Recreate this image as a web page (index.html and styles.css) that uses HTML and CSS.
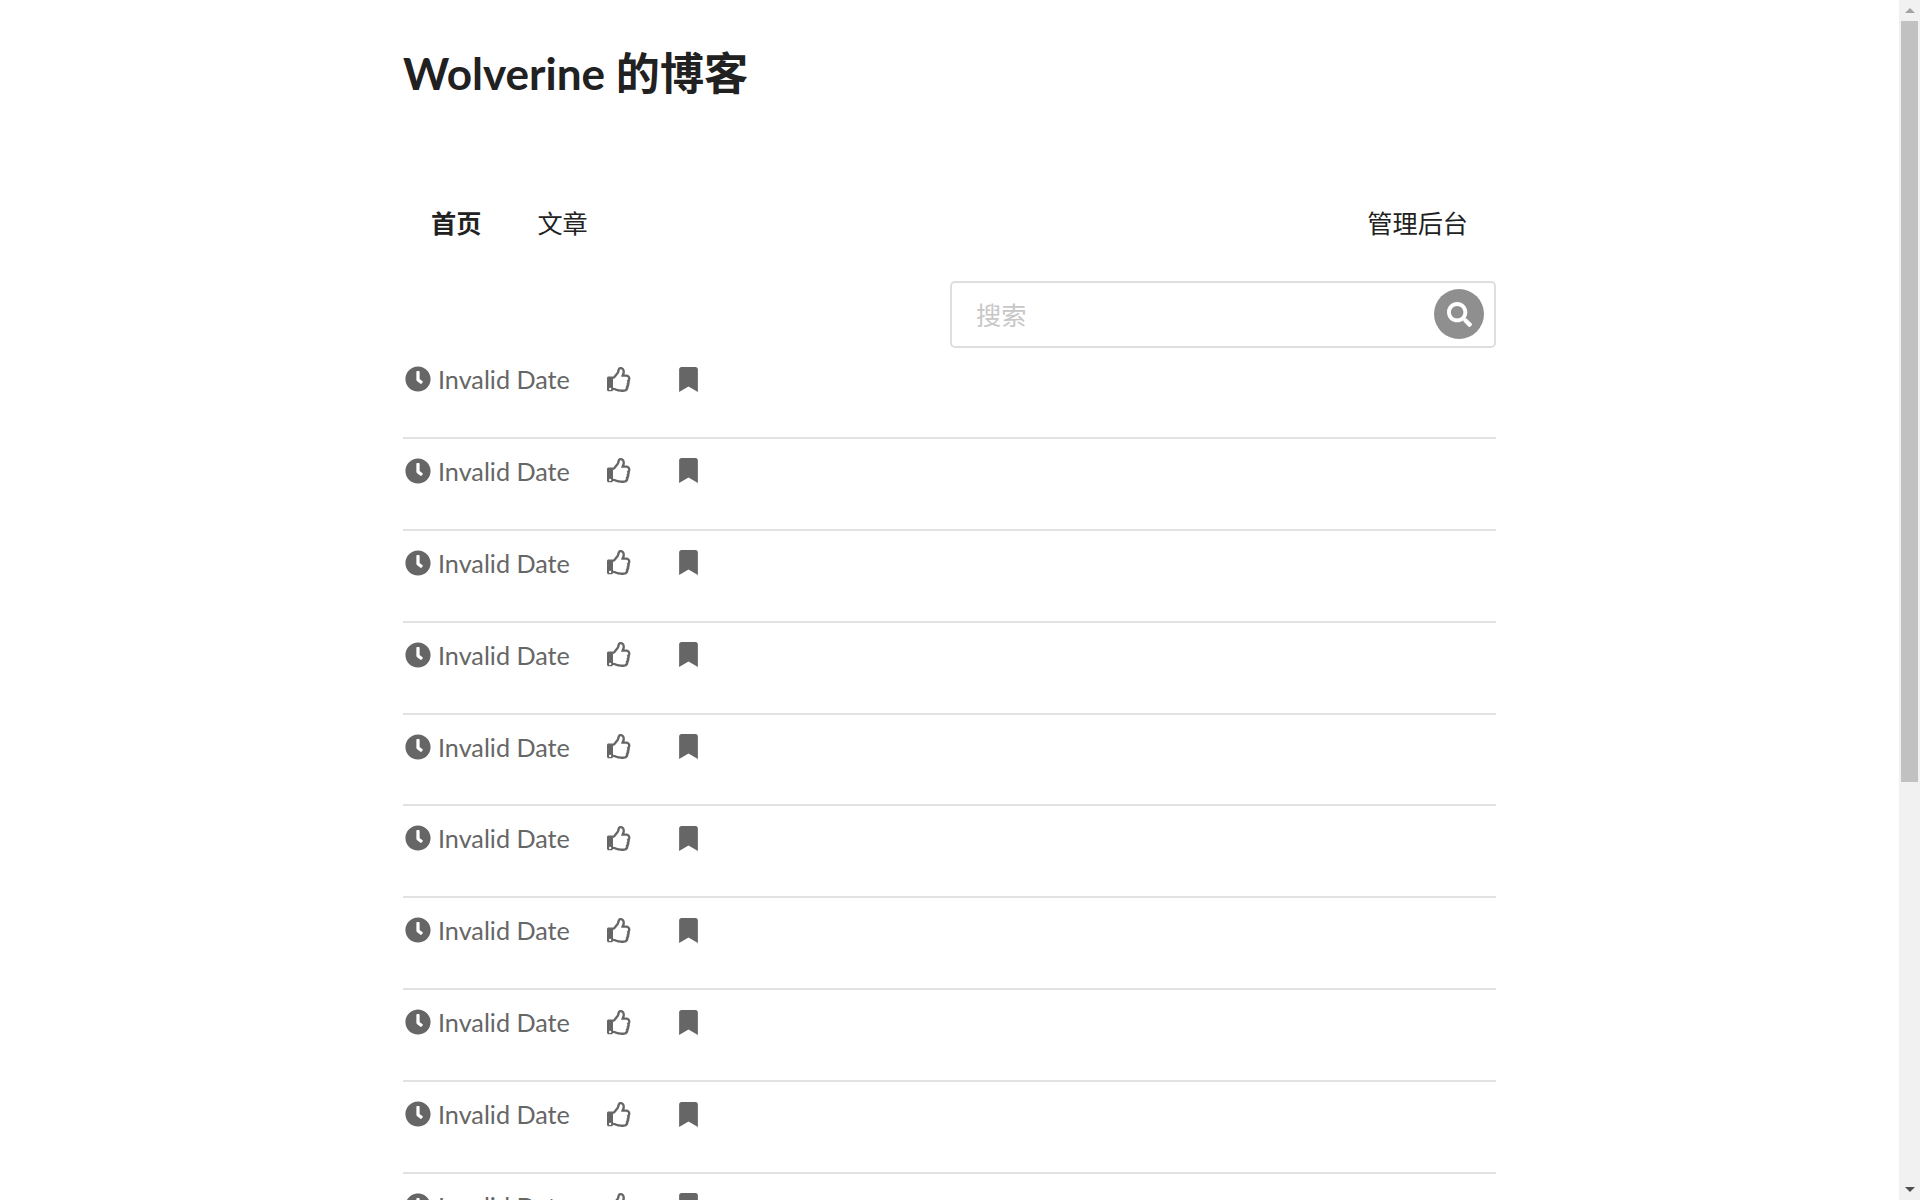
FILE: index.html
```html
<!DOCTYPE html>
<html>
<head>
    <title>Wolverine 的博客</title>
    <link rel="stylesheet" href="styles.css">
</head>
<body>
    <svg class="icon-defs" width="0" height="0">
        <symbol id="i-clock" viewBox="0 0 512 512"><path d="M256,8C119,8,8,119,8,256S119,504,256,504,504,393,504,256,393,8,256,8Zm92.49,313h0l-20,25a16,16,0,0,1-22.49,2.5h0l-67-49.72a40,40,0,0,1-15-31.23V112a16,16,0,0,1,16-16h32a16,16,0,0,1,16,16V256l58,42.5A16,16,0,0,1,348.49,321Z"/></symbol>
        <symbol id="i-thumb" viewBox="0 0 512 512"><path fill-rule="evenodd" d="M466.27 286.69C475.04 271.84 480 256 480 236.85c0-44.015-37.218-85.58-85.82-85.58H357.7c4.92-12.81 8.85-28.13 8.85-46.54C366.55 31.936 328.86 0 271.28 0c-61.607 0-58.093 94.933-71.76 108.6-22.747 22.747-49.615 66.447-68.76 83.4H32c-17.673 0-32 14.327-32 32v240c0 17.673 14.327 32 32 32h64c14.893 0 27.408-10.174 30.978-23.95 44.509 1.001 75.06 39.94 177.802 39.94 7.22 0 15.22.01 22.22.01 77.117 0 111.986-39.423 112.94-95.33 13.319-18.425 20.299-43.122 17.34-66.99 9.854-18.452 13.664-40.343 8.99-62.99zM64 472c-13.255 0-24-10.745-24-24s10.745-24 24-24 24 10.745 24 24-10.745 24-24 24zM122.68 240h16.24c28.36 0 67.98-70.89 94.54-97.46 28.36-28.36 18.91-75.63 37.82-94.54 47.27 0 47.27 32.98 47.27 56.73 0 39.17-28.36 56.72-28.36 94.54h103.99c21.11 0 37.73 18.91 37.82 37.82.09 18.9-12.82 37.81-28.36 37.81 22.18 23.94 13.03 53.47-4.42 64.38 12.56 21.13 1.26 49.41-13.94 57.57 7.7 48.78-17.608 65.9-53.12 65.9h-37.82c-71.639 0-118.029-37.82-171.64-37.82V240z"/></symbol>
        <symbol id="i-bookmark" viewBox="0 0 384 512"><path d="M0 512V48C0 21.490 21.490 0 48 0h288c26.510 0 48 21.490 48 48v464L192 400 0 512z"/></symbol>
        <symbol id="i-search" viewBox="0 0 512 512"><path d="M505 442.700L405.300 343c-4.500-4.500-10.600-7-17-7H372c27.600-35.300 44-79.700 44-128C416 93.100 322.900 0 208 0S0 93.100 0 208s93.100 208 208 208c48.300 0 92.700-16.400 128-44v16.300c0 6.400 2.500 12.500 7 17l99.700 99.700c9.400 9.400 24.600 9.400 33.900 0l28.300-28.300c9.400-9.400 9.400-24.600.1-34zM208 336c-70.700 0-128-57.200-128-128 0-70.700 57.200-128 128-128 70.700 0 128 57.200 128 128 0 70.700-57.200 128-128 128z"/></symbol>
    </svg>

    <main class="page">
        <div class="container">
            <h1 class="site-title">Wolverine 的博客</h1>

            <nav class="nav">
                <a class="nav-item active">首页</a>
                <a class="nav-item">文章</a>
                <a class="nav-item nav-right">管理后台</a>
            </nav>

            <div class="search-row">
                <div class="search-box">
                    <input class="search-input" type="text" placeholder="搜索">
                    <button class="search-btn"><svg class="search-icon"><use href="#i-search"/></svg></button>
                </div>
            </div>

            <ul class="post-list">
                <li class="post"><div class="post-meta"><span class="meta-date"><svg class="ic-clock"><use href="#i-clock"/></svg>Invalid Date</span><svg class="ic-thumb"><use href="#i-thumb"/></svg><svg class="ic-bookmark"><use href="#i-bookmark"/></svg></div></li>
                <li class="post"><div class="post-meta"><span class="meta-date"><svg class="ic-clock"><use href="#i-clock"/></svg>Invalid Date</span><svg class="ic-thumb"><use href="#i-thumb"/></svg><svg class="ic-bookmark"><use href="#i-bookmark"/></svg></div></li>
                <li class="post"><div class="post-meta"><span class="meta-date"><svg class="ic-clock"><use href="#i-clock"/></svg>Invalid Date</span><svg class="ic-thumb"><use href="#i-thumb"/></svg><svg class="ic-bookmark"><use href="#i-bookmark"/></svg></div></li>
                <li class="post"><div class="post-meta"><span class="meta-date"><svg class="ic-clock"><use href="#i-clock"/></svg>Invalid Date</span><svg class="ic-thumb"><use href="#i-thumb"/></svg><svg class="ic-bookmark"><use href="#i-bookmark"/></svg></div></li>
                <li class="post"><div class="post-meta"><span class="meta-date"><svg class="ic-clock"><use href="#i-clock"/></svg>Invalid Date</span><svg class="ic-thumb"><use href="#i-thumb"/></svg><svg class="ic-bookmark"><use href="#i-bookmark"/></svg></div></li>
                <li class="post"><div class="post-meta"><span class="meta-date"><svg class="ic-clock"><use href="#i-clock"/></svg>Invalid Date</span><svg class="ic-thumb"><use href="#i-thumb"/></svg><svg class="ic-bookmark"><use href="#i-bookmark"/></svg></div></li>
                <li class="post"><div class="post-meta"><span class="meta-date"><svg class="ic-clock"><use href="#i-clock"/></svg>Invalid Date</span><svg class="ic-thumb"><use href="#i-thumb"/></svg><svg class="ic-bookmark"><use href="#i-bookmark"/></svg></div></li>
                <li class="post"><div class="post-meta"><span class="meta-date"><svg class="ic-clock"><use href="#i-clock"/></svg>Invalid Date</span><svg class="ic-thumb"><use href="#i-thumb"/></svg><svg class="ic-bookmark"><use href="#i-bookmark"/></svg></div></li>
                <li class="post"><div class="post-meta"><span class="meta-date"><svg class="ic-clock"><use href="#i-clock"/></svg>Invalid Date</span><svg class="ic-thumb"><use href="#i-thumb"/></svg><svg class="ic-bookmark"><use href="#i-bookmark"/></svg></div></li>
                <li class="post"><div class="post-meta"><span class="meta-date"><svg class="ic-clock"><use href="#i-clock"/></svg>Invalid Date</span><svg class="ic-thumb"><use href="#i-thumb"/></svg><svg class="ic-bookmark"><use href="#i-bookmark"/></svg></div></li>
            </ul>
        </div>
    </main>

    <div class="scrollbar">
        <div class="sb-btn"><span class="sb-arrow-up"></span></div>
        <div class="sb-thumb"></div>
        <div class="sb-btn sb-btn-end"><span class="sb-arrow-down"></span></div>
    </div>
</body>
</html>
```

FILE: styles.css
```css
html, body {
    height: 100%;
}
body {
    margin: 0;
    display: flex;
    overflow: hidden;
    background: #fff;
    color: #212121;
    font-family: Lato, "Noto Sans CJK SC", sans-serif;
}
.icon-defs {
    display: none;
}
.page {
    flex: 1;
    height: 100%;
    overflow: hidden;
}
.container {
    width: 1093px;
    margin: 0 auto;
}
.site-title {
    margin: 0;
    padding-top: 44px;
    height: 100px;
    font-size: 44.1px;
    line-height: 58px;
    font-weight: 700;
}
.nav {
    display: flex;
    margin-top: 49px;
    height: 57px;
    align-items: center;
    font-size: 25.2px;
}
.nav-item {
    padding: 0 28px;
}
.nav-item.active {
    font-weight: 700;
}
.nav-right {
    margin-left: auto;
}
.search-row {
    display: flex;
    justify-content: flex-end;
    margin-top: 31px;
}
.search-box {
    display: flex;
    align-items: center;
    width: 546px;
    height: 67px;
    box-sizing: border-box;
    border: 2px solid #dedede;
    border-radius: 5px;
    padding: 0 10px 0 24px;
}
.search-input {
    flex: 1;
    border: 0;
    outline: 0;
    padding: 0;
    font: 25.2px Lato, "Noto Sans CJK SC", sans-serif;
}
.search-input::placeholder {
    color: #c7c7c7;
}
.search-btn {
    width: 50px;
    height: 50px;
    margin-top: -1px;
    padding: 0;
    border: 0;
    border-radius: 50%;
    background: #8f8f8f;
    display: flex;
    align-items: center;
    justify-content: center;
}
.search-icon {
    width: 25px;
    height: 25px;
    fill: #fff;
}
.post-list {
    list-style: none;
    margin: -1px 0 0;
    padding: 0;
}
.post {
    height: 91.875px;
    box-sizing: border-box;
    padding-top: 17px;
    border-bottom: 2px solid #e2e2e2;
}
.post-meta {
    display: flex;
    align-items: center;
    height: 30px;
    color: #666;
    font-size: 25.2px;
}
.post-meta svg {
    fill: #666;
    flex: none;
}
.meta-date {
    display: flex;
    align-items: center;
    width: 204px;
}
.ic-clock {
    width: 26px;
    height: 26px;
    margin: 0 7px 0 2px;
}
.ic-thumb {
    width: 25px;
    height: 25px;
}
.ic-bookmark {
    width: 19px;
    height: 25px;
    margin-left: 47px;
}
.scrollbar {
    flex: none;
    width: 21px;
    height: 100%;
    display: flex;
    flex-direction: column;
    align-items: center;
    background: #f1f1f1;
}
.sb-btn {
    flex: none;
    width: 21px;
    height: 21px;
    display: flex;
    align-items: center;
    justify-content: center;
}
.sb-btn-end {
    margin-top: auto;
}
.sb-arrow-up,
.sb-arrow-down {
    width: 0;
    height: 0;
    border-left: 5px solid transparent;
    border-right: 5px solid transparent;
}
.sb-arrow-up {
    border-bottom: 5px solid #a3a3a3;
}
.sb-arrow-down {
    border-top: 5px solid #505050;
}
.sb-thumb {
    flex: none;
    width: 17px;
    height: 761px;
    background: #c1c1c1;
}
```
